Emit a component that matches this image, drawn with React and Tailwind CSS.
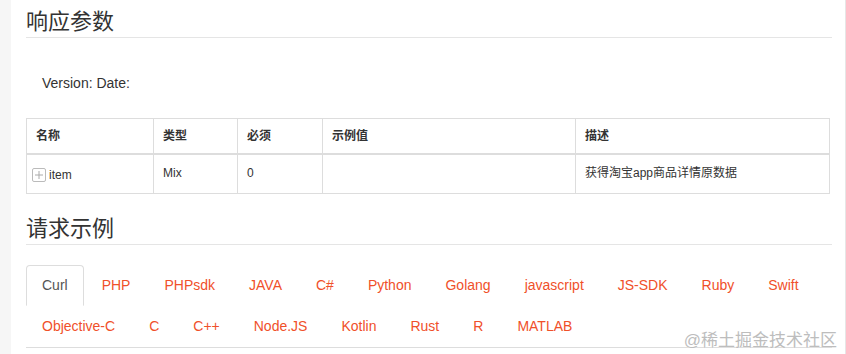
const tabsRow1 = ['Curl', 'PHP', 'PHPsdk', 'JAVA', 'C#', 'Python', 'Golang', 'javascript', 'JS-SDK', 'Ruby', 'Swift']
const tabsRow2 = ['Objective-C', 'C', 'C++', 'Node.JS', 'Kotlin', 'Rust', 'R', 'MATLAB']

const font = { fontFamily: '"Liberation Sans", Arial, "Noto Sans CJK SC", sans-serif' }

const thClasses = 'border border-[#ddd] border-b-2 px-[9px] py-[8px] text-left text-[12px] font-bold text-[#333]'
const tdClasses = 'border border-[#ddd] px-[9px] py-[9px] align-top text-[12px] text-[#333]'

const Tab = ({ label, active }) => (
  <li className="mr-[2px]">
    <span
      className={
        active
          ? 'block rounded-t-[4px] border border-[#ddd] border-b-transparent bg-white px-[15px] py-[10px] text-[14px] leading-[19px] text-[#555]'
          : 'block border border-transparent px-[15px] py-[10px] text-[14px] leading-[19px] text-[#f0502a]'
      }
    >
      {label}
    </span>
  </li>
)

export default function App() {
  return (
    <div className="relative flex h-[354px] w-[846px] overflow-hidden bg-white" style={font}>
      <div className="w-[11px] shrink-0 bg-[#f6f6f6]" />
      <div className="flex-1 border-r border-[#e6e6e6] pl-[15px] pr-[13px]">
        <h3 className="mt-[9px] border-b border-[#e5e5e5] pb-[2px] text-[22px] leading-[26px] text-[#333]">响应参数</h3>
        <p className="mt-[35px] pl-[16px] text-[14px] leading-[20px] text-[#333]">Version: Date:</p>
        <table className="mt-[25px] w-[804px] border-collapse">
          <thead>
            <tr className="h-[35px]">
              <th className={`${thClasses} w-[127px]`}>名称</th>
              <th className={`${thClasses} w-[84px]`}>类型</th>
              <th className={`${thClasses} w-[85px]`}>必须</th>
              <th className={`${thClasses} w-[253px]`}>示例值</th>
              <th className={thClasses}>描述</th>
            </tr>
          </thead>
          <tbody>
            <tr className="h-[39px]">
              <td className={`${tdClasses} !px-[5px] !align-middle`}>
                <span className="flex items-center gap-[3px] pt-[2px]">
                  <span className="flex h-[14px] w-[14px] items-center justify-center rounded-[2px] border border-[#bbb]">
                    <svg width="10" height="10" viewBox="0 0 10 10">
                      <path d="M5 1v8M1 5h8" stroke="#aaa" strokeWidth="1" />
                    </svg>
                  </span>
                  item
                </span>
              </td>
              <td className={tdClasses}>Mix</td>
              <td className={tdClasses}>0</td>
              <td className={tdClasses}></td>
              <td className={tdClasses}>获得淘宝app商品详情原数据</td>
            </tr>
          </tbody>
        </table>
        <h3 className="mt-[22px] border-b border-[#e5e5e5] pb-[2px] text-[22px] leading-[26px] text-[#333]">请求示例</h3>
        <ul className="mt-[20px] flex flex-wrap border-b border-[#ddd]">
          {tabsRow1.map((t, i) => (
            <Tab key={t} label={t} active={i === 0} />
          ))}
          {tabsRow2.map((t) => (
            <Tab key={t} label={t} />
          ))}
        </ul>
      </div>
      <div className="absolute bottom-[2px] right-[9px] text-[17px] leading-[22px] text-[#bdbdbd] [text-shadow:0_0_1px_#fff]">
        @稀土掘金技术社区
      </div>
    </div>
  )
}
